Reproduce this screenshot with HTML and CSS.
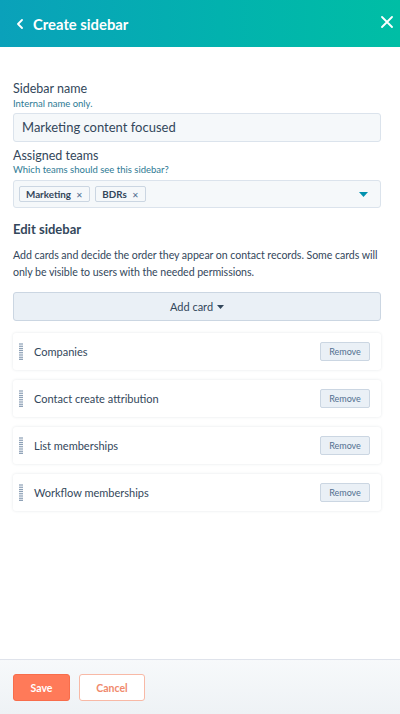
FILE: index.html
```html
<!DOCTYPE html>
<html lang="en">
<head>
<meta charset="utf-8">
<title>Create sidebar</title>
<link rel="stylesheet" href="styles.css">
</head>
<body>
<div class="panel">
  <header class="header">
    <div class="header-left">
      <svg class="chev" width="8" height="10" viewBox="0 0 8 10"><path d="M6 1 L2 5 L6 9" fill="none" stroke="#fff" stroke-width="1.8" stroke-linecap="round" stroke-linejoin="round"/></svg>
      <span class="title">Create sidebar</span>
    </div>
    <svg class="close" width="12" height="12" viewBox="0 0 12 12"><path d="M1 1 L11 11 M11 1 L1 11" fill="none" stroke="#fff" stroke-width="1.8" stroke-linecap="round"/></svg>
  </header>
  <main class="content">
    <div class="label first">Sidebar name</div>
    <div class="helper">Internal name only.</div>
    <div class="input">Marketing content focused</div>
    <div class="label second">Assigned teams</div>
    <div class="helper tight">Which teams should see this sidebar?</div>
    <div class="select">
      <div class="tags">
        <span class="tag">Marketing <span class="x">✕</span></span>
        <span class="tag">BDRs <span class="x">✕</span></span>
      </div>
      <svg class="caret" width="9" height="5" viewBox="0 0 9 5"><path d="M0 0 H9 L4.5 5 Z" fill="#0091ae"/></svg>
    </div>
    <h2 class="section">Edit sidebar</h2>
    <p class="desc">Add cards and decide the order they appear on contact records. Some cards will only be visible to users with the needed permissions.</p>
    <div class="add-btn">Add card <svg width="7" height="4" viewBox="0 0 7 4"><path d="M0 0 H7 L3.5 4 Z" fill="#33475b"/></svg></div>
    <div class="cards">
      <div class="card"><svg class="handle" width="4" height="17" viewBox="0 0 4 17"><g fill="#516f90"><circle cx="1" cy="1" r="0.75"/><circle cx="3" cy="1" r="0.75"/><circle cx="1" cy="3.2" r="0.75"/><circle cx="3" cy="3.2" r="0.75"/><circle cx="1" cy="5.4" r="0.75"/><circle cx="3" cy="5.4" r="0.75"/><circle cx="1" cy="7.6" r="0.75"/><circle cx="3" cy="7.6" r="0.75"/><circle cx="1" cy="9.8" r="0.75"/><circle cx="3" cy="9.8" r="0.75"/><circle cx="1" cy="12" r="0.75"/><circle cx="3" cy="12" r="0.75"/><circle cx="1" cy="14.2" r="0.75"/><circle cx="3" cy="14.2" r="0.75"/><circle cx="1" cy="16.3" r="0.75"/><circle cx="3" cy="16.3" r="0.75"/></g></svg><span class="card-name">Companies</span><span class="remove">Remove</span></div>
      <div class="card"><svg class="handle" width="4" height="17" viewBox="0 0 4 17"><g fill="#516f90"><circle cx="1" cy="1" r="0.75"/><circle cx="3" cy="1" r="0.75"/><circle cx="1" cy="3.2" r="0.75"/><circle cx="3" cy="3.2" r="0.75"/><circle cx="1" cy="5.4" r="0.75"/><circle cx="3" cy="5.4" r="0.75"/><circle cx="1" cy="7.6" r="0.75"/><circle cx="3" cy="7.6" r="0.75"/><circle cx="1" cy="9.8" r="0.75"/><circle cx="3" cy="9.8" r="0.75"/><circle cx="1" cy="12" r="0.75"/><circle cx="3" cy="12" r="0.75"/><circle cx="1" cy="14.2" r="0.75"/><circle cx="3" cy="14.2" r="0.75"/><circle cx="1" cy="16.3" r="0.75"/><circle cx="3" cy="16.3" r="0.75"/></g></svg><span class="card-name">Contact create attribution</span><span class="remove">Remove</span></div>
      <div class="card"><svg class="handle" width="4" height="17" viewBox="0 0 4 17"><g fill="#516f90"><circle cx="1" cy="1" r="0.75"/><circle cx="3" cy="1" r="0.75"/><circle cx="1" cy="3.2" r="0.75"/><circle cx="3" cy="3.2" r="0.75"/><circle cx="1" cy="5.4" r="0.75"/><circle cx="3" cy="5.4" r="0.75"/><circle cx="1" cy="7.6" r="0.75"/><circle cx="3" cy="7.6" r="0.75"/><circle cx="1" cy="9.8" r="0.75"/><circle cx="3" cy="9.8" r="0.75"/><circle cx="1" cy="12" r="0.75"/><circle cx="3" cy="12" r="0.75"/><circle cx="1" cy="14.2" r="0.75"/><circle cx="3" cy="14.2" r="0.75"/><circle cx="1" cy="16.3" r="0.75"/><circle cx="3" cy="16.3" r="0.75"/></g></svg><span class="card-name">List memberships</span><span class="remove">Remove</span></div>
      <div class="card"><svg class="handle" width="4" height="17" viewBox="0 0 4 17"><g fill="#516f90"><circle cx="1" cy="1" r="0.75"/><circle cx="3" cy="1" r="0.75"/><circle cx="1" cy="3.2" r="0.75"/><circle cx="3" cy="3.2" r="0.75"/><circle cx="1" cy="5.4" r="0.75"/><circle cx="3" cy="5.4" r="0.75"/><circle cx="1" cy="7.6" r="0.75"/><circle cx="3" cy="7.6" r="0.75"/><circle cx="1" cy="9.8" r="0.75"/><circle cx="3" cy="9.8" r="0.75"/><circle cx="1" cy="12" r="0.75"/><circle cx="3" cy="12" r="0.75"/><circle cx="1" cy="14.2" r="0.75"/><circle cx="3" cy="14.2" r="0.75"/><circle cx="1" cy="16.3" r="0.75"/><circle cx="3" cy="16.3" r="0.75"/></g></svg><span class="card-name">Workflow memberships</span><span class="remove">Remove</span></div>
    </div>
  </main>
  <footer class="footer">
    <span class="btn save">Save</span>
    <span class="btn cancel">Cancel</span>
  </footer>
</div>
</body>
</html>
```

FILE: styles.css
```css
* { box-sizing: border-box; }
html, body { margin: 0; padding: 0; }
body {
  font-family: Lato, "Open Sans", sans-serif;
  color: #33475b;
  background: #fff;
}
.panel {
  width: 400px;
  height: 714px;
  display: flex;
  flex-direction: column;
}
.header {
  height: 47px;
  flex: none;
  background: linear-gradient(90deg, #0aa1ba 0%, #02b2ae 55%, #00bea5 100%);
  display: flex;
  align-items: center;
  justify-content: space-between;
  padding: 0 7px 0 16px;
}
.header-left { display: flex; align-items: center; }
.chev { margin-right: 9px; }
.title {
  color: #fff;
  font-size: 14.8px;
  font-weight: 700;
}
.close { margin-top: -3px; }
.content {
  flex: 1;
  padding: 0 19px 0 13px;
}
.label {
  font-size: 12.5px;
  line-height: 16px;
  color: #33475b;
}
.label.first { margin-top: 34px; }
.label.second { margin-top: 6px; }
.helper {
  font-size: 9.5px;
  line-height: 12px;
  color: #2d7a94;
  margin-top: 1px;
}
.helper.tight { margin-top: 0; }
.input {
  margin-top: 3px;
  height: 29px;
  background: #f5f8fa;
  border: 1px solid #dbe3ec;
  border-radius: 3px;
  font-size: 13px;
  line-height: 27px;
  padding-left: 8px;
  color: #33475b;
}
.select {
  margin-top: 4px;
  height: 28px;
  background: #f5f8fa;
  border: 1px solid #dbe3ec;
  border-radius: 3px;
  display: flex;
  align-items: center;
  justify-content: space-between;
  padding: 0 12px 0 5px;
}
.tags { display: flex; gap: 5px; }
.tag {
  height: 16px;
  border: 1px solid #cbd6e2;
  background: #f5f8fa;
  border-radius: 2px;
  font-size: 9.8px;
  font-weight: 700;
  line-height: 14px;
  padding: 0 6px;
  color: #33475b;
}
.tag .x {
  font-weight: 400;
  font-size: 8px;
  color: #516f90;
  margin-left: 3px;
}
.caret { margin-top: 1px; }
.section {
  margin: 13px 0 0;
  font-size: 13px;
  line-height: 16px;
  font-weight: 700;
  color: #33475b;
}
.desc {
  margin: 10px -8px 0 0;
  font-size: 10.6px;
  letter-spacing: -0.05px;
  line-height: 17px;
  color: #33475b;
}
.add-btn {
  margin-top: 11px;
  height: 29px;
  background: #eaf0f6;
  border: 1px solid #cbd6e2;
  border-radius: 3px;
  display: flex;
  align-items: center;
  justify-content: center;
  gap: 4px;
  font-size: 11px;
  color: #33475b;
}
.cards {
  margin-top: 12px;
  display: flex;
  flex-direction: column;
  gap: 10px;
}
.card {
  height: 37px;
  background: #fff;
  border-radius: 3px;
  box-shadow: 0 0 3px rgba(45, 62, 80, 0.12);
  display: flex;
  align-items: center;
  padding: 0 11px 0 6px;
}
.handle {
  flex: none;
  margin-right: 11px;
}
.card-name {
  flex: 1;
  font-size: 11px;
  color: #33475b;
}
.remove {
  width: 50px;
  height: 19px;
  background: #eaf0f6;
  border: 1px solid #cbd6e2;
  border-radius: 2px;
  font-size: 9px;
  line-height: 17px;
  text-align: center;
  color: #516f90;
}
.footer {
  flex: none;
  height: 55px;
  border-top: 1px solid #dfe3eb;
  background: linear-gradient(180deg, #f7f9fb 0%, #eef2f5 100%);
  display: flex;
  align-items: flex-start;
  gap: 9px;
  padding: 14px 13px 0;
}
.btn {
  height: 27px;
  border-radius: 3px;
  font-size: 10.5px;
  font-weight: 700;
  display: flex;
  align-items: center;
  justify-content: center;
}
.save {
  width: 57px;
  background: #ff7a59;
  color: #fff;
  border: 1px solid #f86d4b;
}
.cancel {
  width: 66px;
  background: #fff;
  color: #f0896c;
  border: 1px solid #f8b9a6;
}
```
